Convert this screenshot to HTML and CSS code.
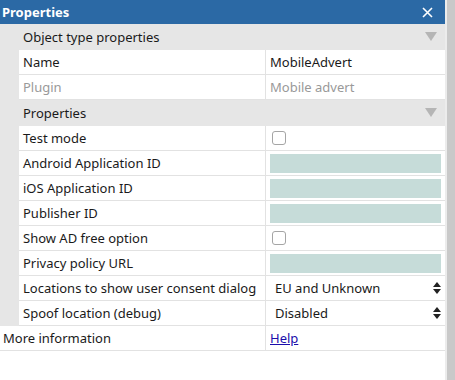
FILE: index.html
```html
<!DOCTYPE html>
<html lang="en">
<head>
    <meta charset="UTF-8">
    <title>Properties</title>
    <link rel="stylesheet" href="styles.css">
</head>
<body>
    <div class="window">
        <div class="panel">
            <div class="title-bar">
                <span>Properties</span>
                <svg class="close" width="11" height="11" viewBox="0 0 11 11">
                    <path d="M1 1 L10 10 M10 1 L1 10" stroke="#fff" stroke-width="1.6"/>
                </svg>
            </div>

            <div class="section">
                <span>Object type properties</span>
                <span class="arrow"></span>
            </div>
            <div class="row">
                <div class="name">Name</div>
                <div class="value">MobileAdvert</div>
            </div>
            <div class="row muted">
                <div class="name">Plugin</div>
                <div class="value">Mobile advert</div>
            </div>

            <div class="section">
                <span>Properties</span>
                <span class="arrow"></span>
            </div>
            <div class="row">
                <div class="name">Test mode</div>
                <div class="value"><span class="check"></span></div>
            </div>
            <div class="row">
                <div class="name">Android Application ID</div>
                <div class="value"><span class="field"></span></div>
            </div>
            <div class="row">
                <div class="name">iOS Application ID</div>
                <div class="value"><span class="field"></span></div>
            </div>
            <div class="row">
                <div class="name">Publisher ID</div>
                <div class="value"><span class="field"></span></div>
            </div>
            <div class="row">
                <div class="name">Show AD free option</div>
                <div class="value"><span class="check"></span></div>
            </div>
            <div class="row">
                <div class="name">Privacy policy URL</div>
                <div class="value"><span class="field"></span></div>
            </div>
            <div class="row">
                <div class="name">Locations to show user consent dialog</div>
                <div class="value select">EU and Unknown<span class="updown"></span></div>
            </div>
            <div class="row">
                <div class="name">Spoof location (debug)</div>
                <div class="value select">Disabled<span class="updown"></span></div>
            </div>
            <div class="row top">
                <div class="name">More information</div>
                <div class="value"><a href="#">Help</a></div>
            </div>
        </div>
        <div class="scrollbar"></div>
    </div>
</body>
</html>
```

FILE: styles.css
```css
* {
    margin: 0;
    padding: 0;
    box-sizing: border-box;
}

body {
    background: #fff;
    font-family: "Noto Sans", "Liberation Sans", sans-serif;
    font-size: 13px;
    color: #1a1a1a;
}

.window {
    display: flex;
    height: 380px;
}

.panel {
    width: 445px;
}

.scrollbar {
    width: 10px;
    background: #c9c9c9;
    border-left: 2px solid #ececec;
}

.title-bar {
    height: 24px;
    background: #2b69a5;
    color: #fff;
    font-weight: bold;
    font-size: 13px;
    display: flex;
    justify-content: space-between;
    align-items: center;
    padding: 0 12px 0 2px;
}

.section {
    height: 26px;
    background: #e6e6e6;
    display: flex;
    justify-content: space-between;
    align-items: center;
    padding: 0 8px 0 23px;
    border-bottom: 1px solid #e6e6e6;
}

.arrow {
    width: 0;
    height: 0;
    border-left: 6px solid transparent;
    border-right: 6px solid transparent;
    border-top: 9px solid #b5b5b5;
}

.row {
    height: 25px;
    display: grid;
    grid-template-columns: 247px 1fr;
    margin-left: 19px;
    border-bottom: 1px solid #e2e2e2;
    background: #fff;
    box-shadow: -19px 0 0 #e6e6e6;
}

.row.top {
    margin-left: 0;
    grid-template-columns: 266px 1fr;
    box-shadow: none;
}

.name {
    display: flex;
    align-items: center;
    padding-left: 4px;
    white-space: nowrap;
    overflow: hidden;
    border-right: 1px solid #e2e2e2;
}

.row.top .name {
    padding-left: 3px;
}

.value {
    display: flex;
    align-items: center;
    padding: 0 3px 0 4px;
}

.muted {
    color: #999;
}

.check {
    width: 14px;
    height: 14px;
    border: 1px solid #a5a5a5;
    border-radius: 3px;
    margin-left: 2px;
}

.field {
    width: 171px;
    height: 19px;
    background: #c6dcd9;
}

.select {
    justify-content: space-between;
    padding-left: 9px;
    padding-right: 4px;
}

.updown {
    width: 8px;
    height: 14px;
    position: relative;
}

.updown::before,
.updown::after {
    content: "";
    position: absolute;
    left: 0;
    border-left: 4px solid transparent;
    border-right: 4px solid transparent;
}

.updown::before {
    top: 1px;
    border-bottom: 5px solid #222;
}

.updown::after {
    bottom: 1px;
    border-top: 5px solid #222;
}

a {
    color: #1a0dab;
    text-decoration: underline;
}
```
